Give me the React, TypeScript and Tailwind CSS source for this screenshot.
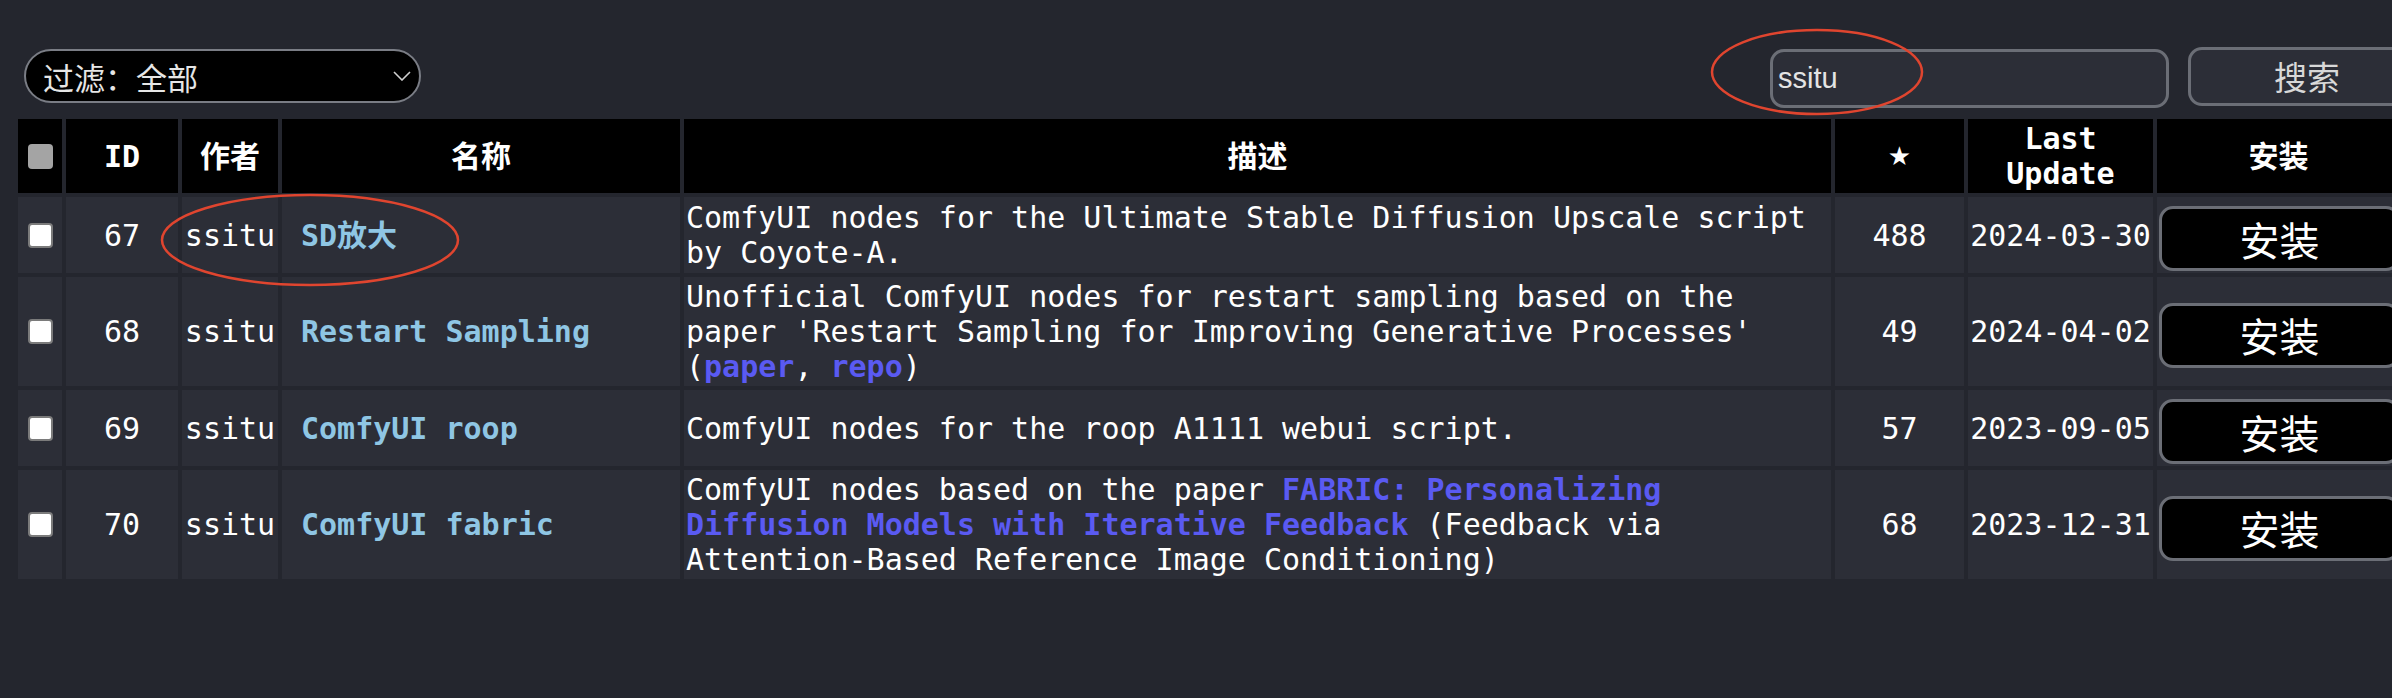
import React from 'react';

const mono = "font-['DejaVu_Sans_Mono','Noto_Sans_CJK_SC',monospace]";

type Row = {
  id: number;
  author: string;
  name: string;
  desc: React.ReactNode;
  stars: number;
  updated: string;
};

const Link = ({ children }: { children: React.ReactNode }) => (
  <a className="font-bold text-[#5a5af2]">{children}</a>
);

const rows: Row[] = [
  {
    id: 67,
    author: 'ssitu',
    name: 'SD放大',
    desc: 'ComfyUI nodes for the Ultimate Stable Diffusion Upscale script by Coyote-A.',
    stars: 488,
    updated: '2024-03-30',
  },
  {
    id: 68,
    author: 'ssitu',
    name: 'Restart Sampling',
    desc: (
      <>
        Unofficial ComfyUI nodes for restart sampling based on the paper 'Restart
        Sampling for Improving Generative Processes' (<Link>paper</Link>,{' '}
        <Link>repo</Link>)
      </>
    ),
    stars: 49,
    updated: '2024-04-02',
  },
  {
    id: 69,
    author: 'ssitu',
    name: 'ComfyUI roop',
    desc: 'ComfyUI nodes for the roop A1111 webui script.',
    stars: 57,
    updated: '2023-09-05',
  },
  {
    id: 70,
    author: 'ssitu',
    name: 'ComfyUI fabric',
    desc: (
      <>
        ComfyUI nodes based on the paper{' '}
        <Link>FABRIC: Personalizing Diffusion Models with Iterative Feedback</Link>{' '}
        (Feedback via Attention-Based Reference Image Conditioning)
      </>
    ),
    stars: 68,
    updated: '2023-12-31',
  },
];

export default function App() {
  return (
    <div className="relative w-full h-[698px] overflow-hidden bg-[#24262e] text-white">
      {/* top bar */}
      <div className="flex items-start h-[115px]">
        <div className="flex-none mt-[49px] ml-[24px] w-[397px] h-[54px] rounded-full border-2 border-[#7a7d85] bg-black flex items-center pl-[17px] pr-[8px]">
          <span className="font-['Noto_Sans_CJK_SC',sans-serif] text-[31px] text-[#e6e6e6] leading-none">
            过滤：全部
          </span>
          <svg className="ml-auto" width="18" height="10" viewBox="0 0 18 10">
            <path d="M1 1 L9 9 L17 1" fill="none" stroke="#d0d0d0" strokeWidth="1.6" />
          </svg>
        </div>
        <div className="flex-none ml-[1349px] mt-[49px] w-[399px] h-[59px] rounded-[14px] border-[3px] border-[#6b6e76] bg-[#2c2e37] flex items-center pl-[5px]">
          <span className="font-['Liberation_Sans',sans-serif] text-[29px] text-[#e4e4e4] leading-none">
            ssitu
          </span>
        </div>
        <button className="flex-none ml-[19px] mt-[47px] w-[238px] h-[59px] rounded-[14px] border-[3px] border-[#6b6e76] bg-[#2c2e37] font-['Noto_Sans_CJK_SC',sans-serif] text-[33px] text-[#d8d8d8] leading-none">
          搜索
        </button>
      </div>

      {/* table */}
      <table
        className={`ml-[14px] w-[2390px] table-fixed border-separate border-spacing-[4px] ${mono} text-[30px] leading-[35px]`}
      >
        <colgroup>
          <col className="w-[44px]" />
          <col className="w-[112px]" />
          <col className="w-[96px]" />
          <col className="w-[398px]" />
          <col className="w-[1147px]" />
          <col className="w-[129px]" />
          <col className="w-[185px]" />
          <col />
        </colgroup>
        <thead>
          <tr className="h-[74px] font-bold">
            <th className="bg-black p-0">
              <div className="mx-auto w-[25px] h-[25px] rounded-[4px] bg-[#a4a4a4]" />
            </th>
            <th className="bg-black p-0">ID</th>
            <th className="bg-black p-0">作者</th>
            <th className="bg-black p-0">名称</th>
            <th className="bg-black p-0">描述</th>
            <th className="bg-black p-0 font-['DejaVu_Sans',sans-serif] text-[26px]">★</th>
            <th className="bg-black p-0 py-[2px]">Last Update</th>
            <th className="bg-black p-0">安装</th>
          </tr>
        </thead>
        <tbody>
          {rows.map((r) => (
            <tr key={r.id}>
              <td className="bg-[#2c2e37] p-0">
                <input
                  type="checkbox"
                  className="block mx-auto appearance-none w-[25px] h-[25px] rounded-[4px] border-2 border-[#7b7b7b] bg-white"
                />
              </td>
              <td className="bg-[#2c2e37] p-0 text-center">{r.id}</td>
              <td className="bg-[#2c2e37] p-0 text-center">{r.author}</td>
              <td className="bg-[#2c2e37] p-0 pl-[19px] font-bold text-[#8fc6e4]">{r.name}</td>
              <td className="bg-[#2c2e37] px-[2px] py-[2px]">{r.desc}</td>
              <td className="bg-[#2c2e37] p-0 text-center">{r.stars}</td>
              <td className="bg-[#2c2e37] p-0 text-center">{r.updated}</td>
              <td className="bg-[#2c2e37] py-[2px] pl-[2px] pr-0">
                <button className="block mt-[7px] w-[241px] h-[65px] rounded-[14px] border-[3px] border-[#6b6e76] bg-black font-['Noto_Sans_CJK_SC',sans-serif] text-[40px] leading-none text-white">
                  安装
                </button>
              </td>
            </tr>
          ))}
        </tbody>
      </table>

      {/* red annotation circles */}
      <svg className="absolute inset-0 pointer-events-none" width="2392" height="698">
        <ellipse cx="1817" cy="72" rx="105" ry="42" fill="none" stroke="#e0452f" strokeWidth="2.5" />
        <ellipse cx="310" cy="240" rx="148" ry="45" fill="none" stroke="#e0452f" strokeWidth="2.5" />
      </svg>
    </div>
  );
}
